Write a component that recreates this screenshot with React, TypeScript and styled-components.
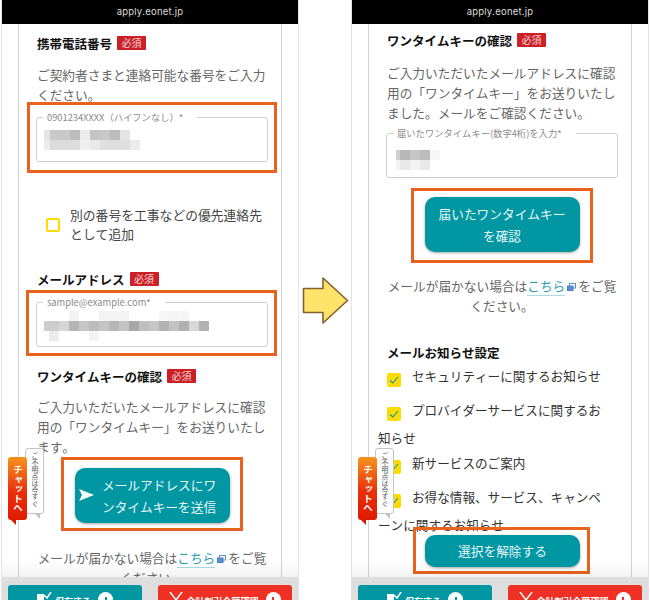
import React from "react";
import styled, { createGlobalStyle } from "styled-components";

const GlobalStyle = createGlobalStyle`
  html, body {
    margin: 0;
    padding: 0;
    background: #fff;
  }
  body {
    font-family: "Noto Sans CJK JP", "Noto Sans", sans-serif;
    font-kerning: none;
  }
`;

interface IBlurCell {
  w: number;
  tone: string;
}

// mosaic rows that hide the typed values in the fields
const phoneRows: IBlurCell[][] = [
  [
    { w: 6, tone: "#e4e4e4" },
    { w: 20, tone: "#c9c9c9" },
    { w: 10, tone: "#bcbcbc" },
    { w: 10, tone: "#ececec" },
    { w: 10, tone: "#c4c4c4" },
    { w: 10, tone: "#c8c8c8" },
    { w: 10, tone: "#bcbcbc" },
    { w: 10, tone: "#e4e4e4" },
  ],
  [
    { w: 6, tone: "#ececec" },
    { w: 30, tone: "#dcdcdc" },
    { w: 10, tone: "#efefef" },
    { w: 10, tone: "#e8e8e8" },
    { w: 30, tone: "#dedede" },
    { w: 10, tone: "#ebebeb" },
  ],
];

const mailRows: IBlurCell[][] = [
  [
    { w: 25, tone: "#fff" },
    { w: 10, tone: "#f3f3f3" },
    { w: 20, tone: "#fff" },
    { w: 10, tone: "#f2f2f2" },
    { w: 20, tone: "#f3f3f3" },
    { w: 30, tone: "#fff" },
    { w: 10, tone: "#f6f6f6" },
    { w: 10, tone: "#f4f4f4" },
    { w: 10, tone: "#f6f6f6" },
  ],
  [
    { w: 15, tone: "#ccc" },
    { w: 10, tone: "#d6d6d6" },
    { w: 10, tone: "#b4b4b4" },
    { w: 10, tone: "#c6c6c6" },
    { w: 10, tone: "#bcbcbc" },
    { w: 10, tone: "#c4c4c4" },
    { w: 10, tone: "#b6b6b6" },
    { w: 10, tone: "#c4c4c4" },
    { w: 10, tone: "#a8a8a8" },
    { w: 10, tone: "#c0c0c0" },
    { w: 10, tone: "#c6c6c6" },
    { w: 10, tone: "#b2b2b2" },
    { w: 10, tone: "#c2c2c2" },
    { w: 10, tone: "#b0b0b0" },
    { w: 10, tone: "#d8d8d8" },
    { w: 10, tone: "#b2b2b2" },
  ],
  [
    { w: 5, tone: "#fff" },
    { w: 10, tone: "#ececec" },
    { w: 30, tone: "#fff" },
    { w: 10, tone: "#f2f2f2" },
  ],
];

const keyRows: IBlurCell[][] = [
  [
    { w: 2, tone: "#fff" },
    { w: 4, tone: "#d0d0d0" },
    { w: 10, tone: "#b8b8b8" },
    { w: 10, tone: "#c6c6c6" },
    { w: 10, tone: "#bcbcbc" },
    { w: 10, tone: "#f6f6f6" },
  ],
  [
    { w: 2, tone: "#fff" },
    { w: 4, tone: "#f2f2f2" },
    { w: 10, tone: "#e8e8e8" },
    { w: 10, tone: "#f2f2f2" },
    { w: 10, tone: "#e8e8e8" },
  ],
];

const BlurValue: React.FC<{ rows: IBlurCell[][] }> = ({ rows }) => (
  <BlurStyle>
    {rows.map((row, i) => (
      <BlurRowStyle key={i}>
        {row.map((cell, j) => (
          <BlurCellStyle key={j} width={cell.w} tone={cell.tone} />
        ))}
      </BlurRowStyle>
    ))}
  </BlurStyle>
);

const ExternalIcon: React.FC = () => (
  <ExternalIconStyle width="9" height="8" viewBox="0 0 9 8">
    <rect x="2.5" y="0.5" width="6" height="4.5" fill="#fff" stroke="#5d8fd0" />
    <rect x="0.5" y="3" width="5.5" height="4.5" fill="#5d8fd0" stroke="#4a7fc4" />
  </ExternalIconStyle>
);

const Check: React.FC = () => (
  <svg width="10" height="8" viewBox="0 0 10 8">
    <path d="M1 4.5 L3.8 7 L9 1" fill="none" stroke="#0f94a8" strokeWidth="1.1" />
  </svg>
);

const ChatBadge: React.FC = () => (
  <ChatWrapStyle>
    <ChatNoteStyle>ご不明点は今すぐ</ChatNoteStyle>
    <ChatTabStyle>チャットへ</ChatTabStyle>
  </ChatWrapStyle>
);

const BottomBar: React.FC = () => (
  <BottomBarStyle>
    <BottomButton color="#0097a3">
      <svg width="15" height="14" viewBox="0 0 15 14">
        <rect x="0" y="2" width="7" height="12" fill="#fff" />
        <path d="M7 3 L10 6 L14 0" fill="none" stroke="#fff" strokeWidth="1.6" />
      </svg>
      <BottomLabel>保存する</BottomLabel>
      <BottomCircle color="#0097a3" />
    </BottomButton>
    <BottomButton color="#ee3124">
      <svg width="14" height="14" viewBox="0 0 14 14">
        <path d="M1 0 L7 8 L13 0 M7 8 V14 M2 9 H12" fill="none" stroke="#fff" strokeWidth="1.5" />
      </svg>
      <BottomLabel>会計割引金額確認</BottomLabel>
      <BottomCircle color="#ee3124" />
    </BottomButton>
  </BottomBarStyle>
);

const Arrow: React.FC = () => (
  <ArrowStyle>
    <svg width="47" height="49" viewBox="0 0 47 49">
      <path
        d="M1.5 12.5 H21 V2 L45.5 24.5 L21 47 V36.5 H1.5 Z"
        fill="#fde36a"
        stroke="#85602f"
        strokeWidth="1.6"
        strokeLinejoin="round"
      />
    </svg>
  </ArrowStyle>
);

const PhoneLeft: React.FC = () => (
  <Phone>
    <UrlBar>apply.eonet.jp</UrlBar>
    <Sheet>
      <HeadingRow top={9}>
        携帯電話番号<Required>必須</Required>
      </HeadingRow>
      <Lead top={12}>ご契約者さまと連絡可能な番号をご入力ください。</Lead>
      <Highlight top={-3} left={-10} padTop={12} padBottom={8}>
        <Field inset={12}>
          <FieldLegend>0901234XXXX（ハイフンなし）*</FieldLegend>
          <BlurValue rows={phoneRows} />
        </Field>
      </Highlight>
      <AgreeRow>
        <EmptyBox />
        <AgreeText>別の番号を工事などの優先連絡先として追加</AgreeText>
      </AgreeRow>
      <HeadingRow top={26}>
        メールアドレス<Required>必須</Required>
      </HeadingRow>
      <Highlight top={1} left={-11} padTop={9} padBottom={6}>
        <Field inset={8}>
          <FieldLegend>sample@example.com*</FieldLegend>
          <BlurValue rows={mailRows} />
        </Field>
      </Highlight>
      <HeadingRow top={10}>
        ワンタイムキーの確認<Required>必須</Required>
      </HeadingRow>
      <Lead top={11}>ご入力いただいたメールアドレスに確認用の「ワンタイムキー」をお送りいたします。</Lead>
      <ButtonFrame top={0} padTop={8} padBottom={5}>
        <ActionButton height={55}>
          <SendIcon>
            <svg width="15" height="12" viewBox="0 0 15 12">
              <path d="M0 0 L15 6 L0 12 L3 6 Z" fill="#fff" />
            </svg>
          </SendIcon>
          <SendText>メールアドレスにワンタイムキーを送信</SendText>
        </ActionButton>
      </ButtonFrame>
      <Notice top={17}>
        メールが届かない場合は
        <NoticeLink>こちら</NoticeLink>
        <ExternalIcon />
        をご覧ください。
      </Notice>
    </Sheet>
    <ChatBadge />
    <BottomBar />
  </Phone>
);

const PhoneRight: React.FC = () => (
  <Phone>
    <UrlBar>apply.eonet.jp</UrlBar>
    <Sheet>
      <HeadingRow top={6}>
        ワンタイムキーの確認<Required>必須</Required>
      </HeadingRow>
      <Lead top={13}>ご入力いただいたメールアドレスに確認用の「ワンタイムキー」をお送りいたしました。メールをご確認ください。</Lead>
      <LooseField>
        <Field inset={16}>
          <FieldLegend>届いたワンタイムキー(数字4桁)を入力*</FieldLegend>
          <BlurValue rows={keyRows} />
        </Field>
      </LooseField>
      <ButtonFrame top={10} padTop={6} padBottom={8}>
        <ActionButton height={55}>
          <ConfirmText>届いたワンタイムキーを確認</ConfirmText>
        </ActionButton>
      </ButtonFrame>
      <Notice top={13}>
        メールが届かない場合は
        <NoticeLink>こちら</NoticeLink>
        <ExternalIcon />
        をご覧ください。
      </Notice>
      <HeadingRow top={26}>メールお知らせ設定</HeadingRow>
      <OptionList>
        <Option>
          <CheckedBox>
            <Check />
          </CheckedBox>
          セキュリティーに関するお知らせ
        </Option>
        <Option wrapped>
          <CheckedBox>
            <Check />
          </CheckedBox>
          プロバイダーサービスに関するお知らせ
        </Option>
        <Option>
          <CheckedBox>
            <Check />
          </CheckedBox>
          新サービスのご案内
        </Option>
        <Option wrapped>
          <CheckedBox>
            <Check />
          </CheckedBox>
          お得な情報、サービス、キャンペーンに関するお知らせ
        </Option>
      </OptionList>
      <ResetFrame>
        <ActionButton height={32}>
          <ConfirmText>選択を解除する</ConfirmText>
        </ActionButton>
      </ResetFrame>
    </Sheet>
    <ChatBadge />
    <BottomBar />
  </Phone>
);

const App: React.FC = () => (
  <>
    <GlobalStyle />
    <Page>
      <PhoneLeft />
      <Arrow />
      <PhoneRight />
    </Page>
  </>
);

export default App;

const Page = styled.div`
  width: 650px;
  height: 600px;
  display: grid;
  grid-template-columns: 298px 1fr 298px;
  padding: 0 1px;
  box-sizing: border-box;
  overflow: hidden;
  background: #fff;
`;

const Phone = styled.div`
  position: relative;
  height: 600px;
  overflow: hidden;
  background: #fff;
  border-right: 1px solid #e4e4e4;
  border-left: 1px solid #e4e4e4;
  box-sizing: border-box;
  display: flex;
  flex-direction: column;
`;

const UrlBar = styled.div`
  height: 24px;
  flex: none;
  margin: 0 -1px;
  background: #000;
  color: #ddd;
  font-family: "Inter", "Noto Sans", sans-serif;
  font-size: 9.5px;
  line-height: 24px;
  text-align: center;
  letter-spacing: 0.2px;
`;

const Sheet = styled.div`
  margin: 0 16px;
  flex: 1;
  min-height: 0;
  padding: 0 14px 0 18px;
  border-left: 1px solid #d2d2d2;
  border-right: 1px solid #d2d2d2;
  color: #666;
`;

const HeadingRow = styled.div<{ top: number }>`
  margin-top: ${(props) => props.top}px;
  display: flex;
  align-items: center;
  gap: 5px;
  height: 20px;
  color: #111;
  font-size: 12.5px;
  font-weight: 700;
  white-space: nowrap;
`;

const Required = styled.span`
  display: inline-block;
  width: 29px;
  height: 14px;
  background: #cc1f26;
  border-radius: 1px;
  color: #f6d9d9;
  font-size: 10px;
  font-weight: 400;
  line-height: 14px;
  text-align: center;
`;

const Lead = styled.p<{ top: number }>`
  margin: ${(props) => props.top}px 0 0 0;
  font-size: 12.7px;
  line-height: 20px;
  color: #666;
`;

const Highlight = styled.div<{ top: number; left: number; padTop: number; padBottom: number }>`
  margin: ${(props) => props.top}px -10px 0 ${(props) => props.left}px;
  padding: ${(props) => props.padTop}px 6px ${(props) => props.padBottom}px ${(props) => 6 - props.left - 10}px;
  border: 3px solid #e8641e;
`;

const LooseField = styled.div`
  margin: 10px -1px 0 -1px;
`;

const Field = styled.div<{ inset: number }>`
  position: relative;
  height: 45px;
  border: 1px solid #d0d0d0;
  border-radius: 3px;
  box-sizing: border-box;
  background: #fff;
  padding: ${(props) => props.inset}px 0 0 7px;
`;

const FieldLegend = styled.span`
  position: absolute;
  top: -6px;
  left: 6px;
  padding: 0 14px 0 4px;
  background: #fff;
  color: #8a8a8a;
  font-size: 9.3px;
  line-height: 11px;
  white-space: nowrap;
`;

const BlurStyle = styled.div`
  display: flex;
  flex-direction: column;
`;

const BlurRowStyle = styled.div`
  display: flex;
  height: 10px;
`;

const BlurCellStyle = styled.div<{ width: number; tone: string }>`
  width: ${(props) => props.width}px;
  height: 10px;
  background: ${(props) => props.tone};
`;

const AgreeRow = styled.div`
  margin: 33px 0 0 0;
  padding-left: 9px;
  display: flex;
  align-items: center;
  gap: 10px;
`;

const EmptyBox = styled.span`
  flex: none;
  width: 14px;
  height: 14px;
  border: 2px solid #ffdc00;
  border-radius: 2px;
  box-sizing: border-box;
`;

const AgreeText = styled.span`
  max-width: 196px;
  font-size: 12.8px;
  line-height: 18.5px;
  color: #444;
`;

const ButtonFrame = styled.div<{ top: number; padTop: number; padBottom: number }>`
  width: 182px;
  margin: ${(props) => props.top}px auto 0 auto;
  padding: ${(props) => props.padTop}px 0 ${(props) => props.padBottom}px 0;
  border: 3px solid #e8641e;
  box-sizing: border-box;
  display: flex;
  justify-content: center;
`;

const ResetFrame = styled.div`
  position: absolute;
  left: 61px;
  top: 527px;
  width: 177px;
  height: 47px;
  padding-left: 2px;
  border: 3px solid #e8641e;
  box-sizing: border-box;
  display: flex;
  justify-content: center;
  align-items: center;
`;

const ActionButton = styled.div<{ height: number }>`
  flex: none;
  width: 155px;
  height: ${(props) => props.height}px;
  background: #0097a3;
  border-radius: 10px;
  box-shadow: 0 1px 3px rgba(0, 0, 0, 0.35);
  color: #e8f6f7;
  display: flex;
  align-items: center;
  justify-content: center;
  position: relative;
`;

const SendIcon = styled.span`
  position: absolute;
  left: 4px;
  top: 21px;
  display: flex;
`;

const SendText = styled.span`
  width: 116px;
  margin-left: 16px;
  font-size: 12.7px;
  line-height: 22px;
`;

const ConfirmText = styled.span`
  width: 130px;
  text-align: center;
  font-size: 12.7px;
  line-height: 22px;
`;

const Notice = styled.p<{ top: number }>`
  margin: ${(props) => props.top}px 0 0 0;
  font-size: 12.7px;
  line-height: 20px;
  color: #666;
  text-align: center;
`;

const NoticeLink = styled.span`
  color: #2aa0b4;
  border-bottom: 1px solid #a9dbe2;
  margin-right: 2px;
`;

const ExternalIconStyle = styled.svg`
  margin-right: 2px;
`;

const OptionList = styled.div`
  margin: 0 6px 0 -9px;
`;

const Option = styled.div<{ wrapped?: boolean }>`
  font-size: 12.6px;
  line-height: 28px;
  color: #333;
  margin-bottom: ${(props) => (props.wrapped ? -3 : 6)}px;
`;

const CheckedBox = styled.span`
  display: inline-flex;
  align-items: center;
  justify-content: center;
  width: 14px;
  height: 14px;
  margin: 0 11px 0 9px;
  background: #ffdc00;
  border-radius: 2px;
  vertical-align: -3px;
`;

const ChatWrapStyle = styled.div`
  position: absolute;
  left: 6px;
  top: 448px;
  width: 38px;
  height: 80px;
`;

const ChatTabStyle = styled.div`
  position: absolute;
  left: 0;
  top: 9px;
  width: 19px;
  height: 63px;
  padding-top: 8px;
  box-sizing: border-box;
  border-radius: 3px;
  background: linear-gradient(to bottom, #f7931e 0%, #e8300a 55%, #e01b00 100%);
  color: #fff;
  font-size: 9.5px;
  font-weight: 700;
  line-height: 19px;
  writing-mode: vertical-rl;
  white-space: nowrap;
  &::after {
    content: "";
    position: absolute;
    left: 3px;
    bottom: -5px;
    border-top: 5px solid #d91a00;
    border-left: 5px solid transparent;
  }
`;

const ChatNoteStyle = styled.div`
  position: absolute;
  left: 17px;
  top: 0;
  width: 19px;
  height: 66px;
  padding-top: 3px;
  border: 1px solid #c4c4c4;
  border-radius: 3px;
  background: #fff;
  box-sizing: border-box;
  color: #555;
  font-size: 6.9px;
  line-height: 17px;
  writing-mode: vertical-rl;
  white-space: nowrap;
  &::after {
    content: "";
    position: absolute;
    right: 3px;
    bottom: -6px;
    border-top: 5px solid #c4c4c4;
    border-left: 5px solid transparent;
  }
`;

const BottomBarStyle = styled.div`
  position: absolute;
  left: 0;
  right: 0;
  bottom: 0;
  height: 23px;
  background: #dedede;
  padding: 8px 6px 0 6px;
  box-sizing: border-box;
  display: flex;
  gap: 16px;
  &::before {
    content: "";
    position: absolute;
    left: 0;
    right: 0;
    bottom: 100%;
    height: 16px;
    background: linear-gradient(to bottom, rgba(0, 0, 0, 0), rgba(0, 0, 0, 0.05));
  }
`;

const BottomButton = styled.div<{ color: string }>`
  flex: 1;
  height: 30px;
  background: ${(props) => props.color};
  border-radius: 3px 3px 0 0;
  color: #fff;
  display: flex;
  align-items: flex-start;
  justify-content: center;
  gap: 3px;
  padding-top: 7px;
  box-sizing: border-box;
`;

const BottomLabel = styled.span`
  font-size: 9px;
  font-weight: 700;
  line-height: 14px;
  margin-top: 3px;
  white-space: nowrap;
`;

const BottomCircle = styled.span<{ color: string }>`
  position: relative;
  width: 15px;
  height: 15px;
  border-radius: 50%;
  background: #fff;
  margin-left: 4px;
  &::after {
    content: "";
    position: absolute;
    left: 6.5px;
    top: 5px;
    width: 2px;
    height: 5px;
    background: ${(props) => props.color};
  }
`;

const ArrowStyle = styled.div`
  display: flex;
  align-items: center;
  justify-content: center;
  height: 600px;
`;
